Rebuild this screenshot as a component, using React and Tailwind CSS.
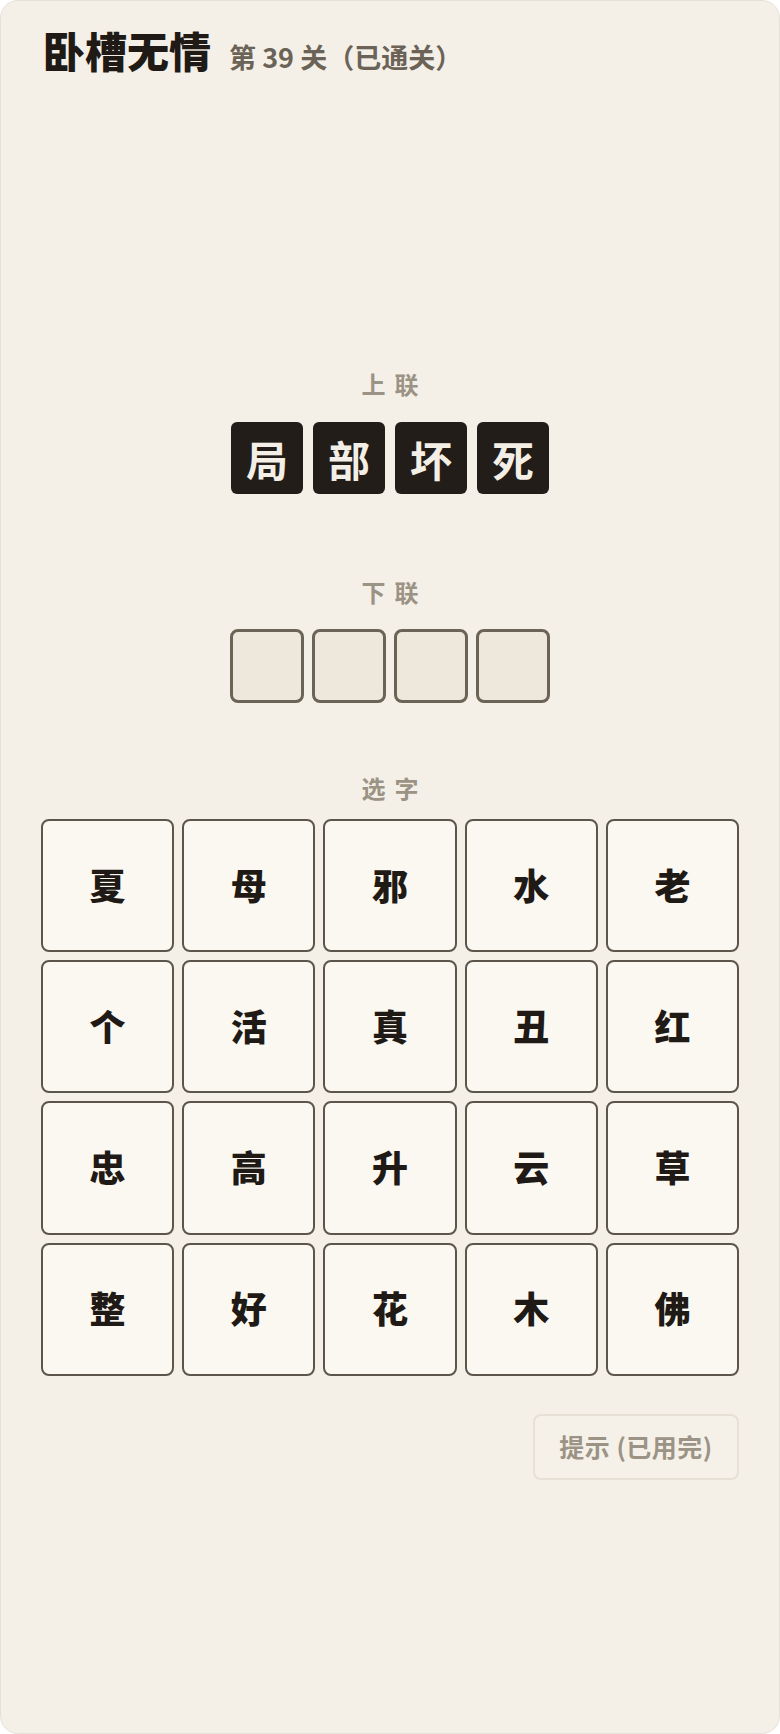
const upper = ["局", "部", "坏", "死"];

const pool = [
  "夏", "母", "邪", "水", "老",
  "个", "活", "真", "丑", "红",
  "忠", "高", "升", "云", "草",
  "整", "好", "花", "木", "佛",
];

const Label = ({ chars }) => (
  <div className="flex justify-center gap-[9px] text-[24px] leading-none font-bold text-[#9b9385]">
    <span>{chars[0]}</span>
    <span>{chars[1]}</span>
  </div>
);

export default function App() {
  return (
    <div className="bg-white">
      <div className="h-[1734px] rounded-[18px] border border-[#e6e1d8] bg-[#f4f0e7] px-10 flex flex-col font-['Noto_Sans_CJK_SC','Noto_Sans',sans-serif]">
        <header className="pt-[28px] pl-[2px] flex items-baseline gap-[18px]">
          <h1 className="text-[42px] leading-none font-black text-[#1f1a16]">卧槽无情</h1>
          <span className="text-[27px] leading-none font-bold text-[#6b6357]">第 39 关（已通关）</span>
        </header>

        {/* 上联 */}
        <section className="mt-[301px]">
          <Label chars={["上", "联"]} />
          <div className="mt-[26px] flex justify-center gap-[10px]">
            {upper.map((c) => (
              <div
                key={c}
                className="w-[72px] h-[72px] rounded-md bg-[#221d19] flex items-center justify-center text-[42px] font-bold text-[#f4efe6]"
              >
                {c}
              </div>
            ))}
          </div>
        </section>

        {/* 下联 */}
        <section className="mt-[86px]">
          <Label chars={["下", "联"]} />
          <div className="mt-[25px] flex justify-center gap-[8px]">
            {[0, 1, 2, 3].map((i) => (
              <div
                key={i}
                className="w-[74px] h-[74px] rounded-lg border-[3px] border-[#6b6356] bg-[#ede7dc]"
              />
            ))}
          </div>
        </section>

        {/* 选字 */}
        <section className="mt-[73px]">
          <Label chars={["选", "字"]} />
          <div className="mt-[19px] grid grid-cols-5 gap-2">
            {pool.map((c) => (
              <button
                key={c}
                className="aspect-square rounded-lg border-2 border-[#5c554b] bg-[#fbf8f1] flex items-center justify-center pb-[4px] text-[36px] leading-none font-black text-[#1f1a16]"
              >
                {c}
              </button>
            ))}
          </div>
        </section>

        <button className="self-end mt-[38px] w-[206px] h-[66px] rounded-lg border-2 border-[#e6e0d5] bg-[#f5f1e8] text-[25px] tracking-[0.5px] font-bold text-[#9b9385]">
          提示 (已用完)
        </button>
      </div>
    </div>
  );
}
